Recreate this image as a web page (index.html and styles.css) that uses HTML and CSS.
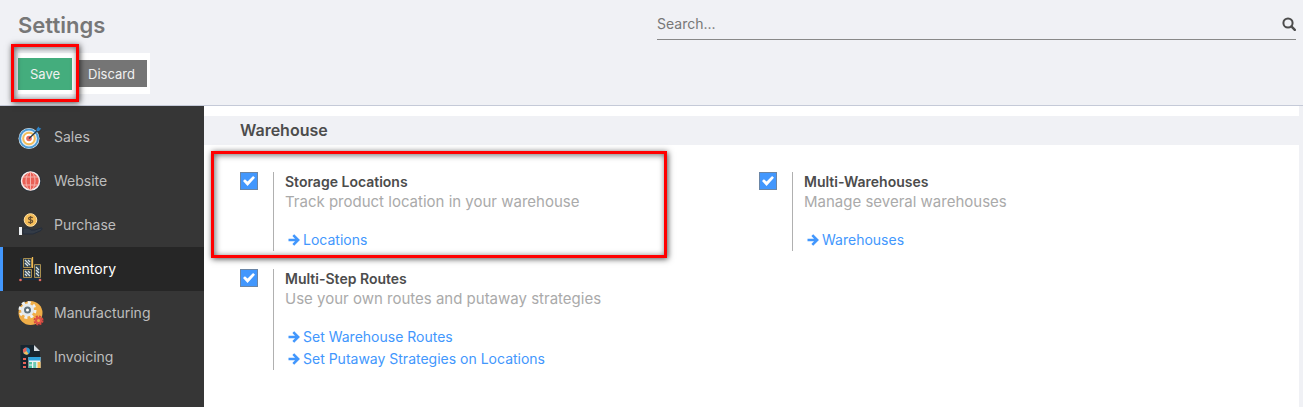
FILE: index.html
```html
<!DOCTYPE html>
<html lang="en">
<head>
<meta charset="utf-8">
<meta name="viewport" content="width=device-width, initial-scale=1">
<title>Settings</title>
<link rel="stylesheet" href="styles.css">
</head>
<body>
<svg class="sprite" aria-hidden="true">
  <symbol id="arrow" viewBox="0 0 12 12"><path d="M.500 6h9M5.300 1.200 10.100 6l-4.800 4.800" fill="none" stroke="currentColor" stroke-width="2.600"/></symbol>
</svg>
<header class="control-panel">
  <div class="heading">
    <h1 class="title">Settings</h1>
    <div class="actions">
      <span class="save-wrap"><button class="btn btn-save" type="button">Save</button><span class="callout callout-save"></span></span>
      <button class="btn btn-discard" type="button">Discard</button>
    </div>
  </div>
  <div class="search">
    <input class="search-input" type="text" placeholder="Search..." aria-label="Search">
    <button class="search-btn" type="button" aria-label="Search">
      <svg width="14" height="14" viewBox="0 0 14 14"><circle cx="6" cy="6" r="4.600" fill="none" stroke="currentColor" stroke-width="2"/><path d="m9.400 9.400 3.400 3.400" stroke="currentColor" stroke-width="2.400" stroke-linecap="round"/></svg>
    </button>
  </div>
</header>
<div class="body">
  <nav class="sidebar">
    <a class="tab" href="#sales">
      <svg class="tab-icon" viewBox="0 0 26 26"><circle cx="11" cy="14.500" r="10.500" fill="#e9eef2"/><circle cx="11" cy="14.500" r="9" fill="none" stroke="#4c9bd6" stroke-width="2"/><circle cx="11" cy="14.500" r="5.800" fill="#fff" stroke="#f5bd58" stroke-width="2"/><circle cx="11" cy="14.500" r="2.800" fill="#e66b62"/><path d="m11 14.500 9.500-9" stroke="#26384b" stroke-width="1.400"/><path d="m18.500 5 2-2.500 1 1.500 1.800.500-2.300 2.500-2.300.200z" fill="#2d7fc0"/></svg>
      <span>Sales</span></a>
    <a class="tab" href="#website">
      <svg class="tab-icon" viewBox="0 0 26 26"><circle cx="12.500" cy="13" r="10.500" fill="#26303b"/><circle cx="12.500" cy="13" r="9" fill="#e95f55" stroke="#f5efed" stroke-width="1.500"/><g fill="none" stroke="#f6b4ae"><ellipse cx="12.500" cy="13" rx="4.500" ry="9"/><path d="M12.500 4v18M4.500 9h16M4.500 17h16"/></g></svg>
      <span>Website</span></a>
    <a class="tab" href="#purchase">
      <svg class="tab-icon" viewBox="0 0 26 26"><path d="M5 17c4-2 6-1 8 1h4l6-2c2 0 1 2-1 3l-7 3H5z" fill="#333b46" stroke="#242d3b"/><path d="M1 15h3v8H1z" fill="#edf0f3"/><circle cx="12.500" cy="8" r="6.300" fill="#f5bd58" stroke="#ffe0a2"/><path d="M14.700 6c-1-1.300-4.200-1-4.200.600 0 1.800 4.200.800 4.200 2.700 0 1.700-3.300 1.900-4.500.500M12.500 4v8" fill="none" stroke="#6b5231" stroke-width="1.200"/></svg>
      <span>Purchase</span></a>
    <a class="tab active" href="#inventory" aria-current="page">
      <svg class="tab-icon" viewBox="0 0 26 26"><path d="M3 2v21h20" fill="none" stroke="#17324c" stroke-width="1.500"/><g fill="#31434e" stroke="#a88f50"><path d="M5.500 2.500h8v9h-8zM5.500 13.500h8v8h-8zM16.500 8.500h6v13h-6z"/></g><path d="m7 4 5 5M10 4l2 2M7 7l3 3M7 15l5 5M10 15l2 2M7 18l2 2M18 11l3 3M18 14l3 3M18 17l3 3" stroke="#d4e1e6" stroke-width="1.300"/><path d="M14.500 1v11" stroke="#f1b950" stroke-width="1.300"/><circle cx="2.500" cy="24" r="1.300" fill="#e66b62"/><circle cx="22" cy="24" r="1.300" fill="#e66b62"/></svg>
      <span>Inventory</span></a>
    <a class="tab" href="#manufacturing">
      <svg class="tab-icon" viewBox="0 0 26 26"><circle cx="12.500" cy="13" r="12" fill="#f0ae48"/><circle cx="9.500" cy="10" r="7.500" fill="none" stroke="#eef2f4" stroke-width="3" stroke-dasharray="3 2.890"/><circle cx="9.500" cy="10" r="5" fill="#60717a" stroke="#e5eaed" stroke-width="3"/><circle cx="9.500" cy="10" r="1.500" fill="#fff"/><circle cx="20.500" cy="20.500" r="4" fill="none" stroke="#d9483e" stroke-width="2" stroke-dasharray="2 1.140"/><circle cx="20.500" cy="20.500" r="2.500" fill="#f0ae48" stroke="#df5348" stroke-width="2"/></svg>
      <span>Manufacturing</span></a>
    <a class="tab" href="#invoicing">
      <svg class="tab-icon" viewBox="0 0 26 26"><path d="M2.500 1H16l6 6v18H2.500z" fill="#17252f"/><path d="M16 1v6h6z" fill="#d5dce1"/><circle cx="8.500" cy="7" r="3.500" fill="#2d9bd4"/><path d="M8.500 7V3.500A3.500 3.500 0 0 0 5.500 9z" fill="#e56258"/><path d="M8.500 7 5.500 9a3.500 3.500 0 0 0 5 1z" fill="#f5bd58"/><g fill="#e56258"><path d="M5 14h3v2H5zM5 18h3v2H5zM5 22h3v2H5z"/></g><path d="M10.500 13h12v11h-12z" fill="#eef4f5"/><path d="M10.500 13h12v3.500h-12z" fill="#2fa3dd"/><path d="M11 18h3v2.500h-3zM11 21.500h3V24h-3z" fill="#4fc1a4"/><path d="M19.500 18h3v6h-3z" fill="#f5bd58"/><path d="M15.200 18h3v6h-3z" fill="#6ccab4"/></svg>
      <span>Invoicing</span></a>
  </nav>
  <main class="content">
    <h2 class="section-title">Warehouse</h2>
    <div class="settings">
      <div class="setting">
        <input class="check" type="checkbox" id="locations" checked>
        <div class="detail">
          <label class="name" for="locations">Storage Locations</label>
          <p class="desc">Track product location in your warehouse</p>
          <a class="link" href="#locations-list"><svg class="arrow"><use href="#arrow"/></svg>Locations</a>
        </div>
        <span class="callout callout-setting"></span>
      </div>
      <div class="setting">
        <input class="check" type="checkbox" id="warehouses" checked>
        <div class="detail">
          <label class="name" for="warehouses">Multi-Warehouses</label>
          <p class="desc">Manage several warehouses</p>
          <a class="link" href="#warehouse-list"><svg class="arrow"><use href="#arrow"/></svg>Warehouses</a>
        </div>
      </div>
      <div class="setting">
        <input class="check" type="checkbox" id="routes" checked>
        <div class="detail">
          <label class="name" for="routes">Multi-Step Routes</label>
          <p class="desc">Use your own routes and putaway strategies</p>
          <a class="link" href="#warehouse-routes"><svg class="arrow"><use href="#arrow"/></svg>Set Warehouse Routes</a>
          <a class="link" href="#putaway"><svg class="arrow"><use href="#arrow"/></svg>Set Putaway Strategies on Locations</a>
        </div>
      </div>
    </div>
  </main>
</div>
</body>
</html>
```

FILE: styles.css
```css
* { box-sizing: border-box; }
body {
  margin: 0;
  min-height: 100vh;
  display: flex;
  flex-direction: column;
  background: #fff;
  color: #4c4c4c;
  font: 14px/20px Inter, "Liberation Sans", sans-serif;
}
.sprite { position: absolute; width: 0; height: 0; }

.control-panel {
  display: grid;
  grid-template-columns: 1fr 1fr;
  padding: 9px 7px 11px 18px;
  background: #f0f1f5;
  border-bottom: 1px solid #c5cad8;
}
.title { margin: 0; font-size: 22px; line-height: 32px; font-weight: 600; color: #777; }
.actions {
  display: inline-flex;
  align-items: center;
  margin-top: 12px;
  padding-right: 3px;
  gap: 4px;
  height: 41px;
  background: #fff;
}
.btn { border: 0; padding: 0 12px; color: #f0f1f0; font: inherit; font-size: 13px; cursor: pointer; }
.save-wrap { position: relative; display: flex; }
.btn-save { height: 32px; background: #44ad7d; }
.btn-discard { height: 27px; background: #757575; }
.callout {
  position: absolute;
  border: 3px solid #f00;
  box-shadow: 1px 1px 6px rgba(0, 0, 0, .7), inset 1px 1px 6px rgba(0, 0, 0, .6);
  pointer-events: none;
}
.callout-save { inset: -14px -7px -12px; }
.search {
  display: flex;
  align-self: start;
  align-items: center;
  height: 31px;
  border-bottom: 1px solid #888;
}
.search-input {
  flex: 1;
  min-width: 0;
  padding: 0;
  border: 0;
  outline: 0;
  background: none;
  color: #4c4c4c;
  font: inherit;
}
.search-input::placeholder { color: #777; opacity: 1; }
.search-btn { display: flex; padding: 0; border: 0; background: none; color: #4c4c4c; }

.body { display: flex; flex: 1; }
.sidebar { flex: 0 0 204px; padding-top: 9px; background: #363636; }
.tab {
  display: flex;
  align-items: center;
  gap: 10px;
  height: 44px;
  padding-left: 15px;
  border-left: 3px solid transparent;
  color: #bdbdbd;
  text-decoration: none;
}
.tab.active { background: #262626; border-color: #4297fd; color: #fff; }
.tab-icon { width: 26px; height: 26px; }

.content { flex: 1; min-width: 0; padding-top: 10px; border-right: 4px solid #f0f1f5; }
.section-title {
  margin: 0;
  padding: 0 36px;
  background: #f0f1f5;
  font-size: 16px;
  line-height: 29px;
  font-weight: 600;
}
.settings {
  display: grid;
  grid-template-columns: 1fr 1fr;
  row-gap: 18px;
  padding: 27px 21px 36px 36px;
}
.setting { position: relative; display: flex; align-items: flex-start; gap: 15px; }
.check {
  appearance: none;
  flex: none;
  width: 18px;
  height: 18px;
  margin: 0;
  border: 1px solid #6b86a6;
  background: #4297fd;
  display: grid;
  place-items: center;
}
.check:checked::before {
  content: "";
  width: 12px;
  height: 10px;
  background: #fff;
  clip-path: polygon(0 50%, 16% 32%, 38% 56%, 84% 0, 100% 18%, 38% 100%);
}
.detail { display: flex; flex-direction: column; align-items: flex-start; padding-left: 11px; border-left: 1px solid #b0b0b0; }
.name { font-weight: 600; }
.desc { margin: 0 0 17px; color: #aaa; font-size: 15px; }
.link { display: flex; align-items: center; gap: 3px; padding-left: 3px; line-height: 22px; color: #4297fd; text-decoration: none; }
.arrow { width: 12px; height: 12px; }
.callout-setting { inset: -21px 92px -7px -29px; }
```
